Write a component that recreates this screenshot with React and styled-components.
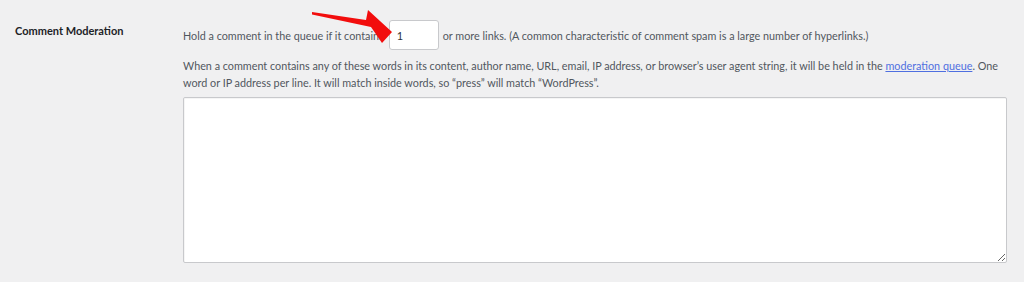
import React from "react";
import styled, { createGlobalStyle } from "styled-components";

const Global = createGlobalStyle`
  html, body { margin: 0; padding: 0; background: #f0f0f1; }
  body { font-family: Lato, "Noto Sans", "Liberation Sans", sans-serif; color: #3c434a; }
`;

const Page = styled.div`
  position: relative;
  width: 1024px;
  height: 282px;
  overflow: hidden;
  padding-left: 15px;
  box-sizing: border-box;
`;

const Row = styled.div`
  display: flex;
  align-items: flex-start;
`;

const Label = styled.div`
  width: 168px;
  flex: none;
  padding-top: 22px;
  font-size: 11px;
  line-height: 17px;
  font-weight: 700;
  color: #1d2327;
`;

const Content = styled.div`
  padding-top: 20px;
  width: 824px;
  font-size: 10.8px;
  line-height: 17px;
  color: #50575e;
`;

const Line = styled.div`
  display: flex;
  align-items: center;
  height: 30px;
  white-space: nowrap;
`;

const NumberBox = styled.div`
  width: 50px;
  height: 30px;
  box-sizing: border-box;
  margin: 0 4px 0 5px;
  background: #fff;
  border: 1px solid #c8c9cc;
  border-radius: 3px;
  padding: 0 7px;
  display: flex;
  align-items: center;
  font-size: 11px;
  color: #2c3338;
`;

const Desc = styled.p`
  margin: 7px 0 0;
  white-space: nowrap;
`;

const Link = styled.a`
  color: #4f6fe0;
  text-decoration: underline;
`;

const TextArea = styled.textarea`
  display: block;
  margin-top: 6px;
  width: 824px;
  height: 166px;
  box-sizing: border-box;
  background: #fff;
  border: 1px solid #c8c9cc;
  border-radius: 2px;
  box-shadow: inset 1px 1px 0 rgba(0,0,0,0.04);
  resize: both;
  outline: none;
  font-family: inherit;
`;

const Arrow = styled.svg`
  position: absolute;
  left: 0;
  top: 0;
  pointer-events: none;
`;

export default function App() {
  return (
    <>
      <Global />
      <Page>
        <Row>
          <Label>Comment Moderation</Label>
          <Content>
            <Line>
              Hold a comment in the queue if it contains
              <NumberBox>1</NumberBox>
              or more links. (A common characteristic of comment spam is a large number of hyperlinks.)
            </Line>
            <Desc>
              When a comment contains any of these words in its content, author name, URL, email, IP address, or browser’s user agent string, it will be held in the <Link href="#">moderation queue</Link>. One
              <br />
              word or IP address per line. It will match inside words, so “press” will match “WordPress”.
            </Desc>
            <TextArea />
          </Content>
        </Row>
        <Arrow width="1024" height="282" viewBox="0 0 1024 282">
          <polygon
            points="312,12 366,20 368,10 392,32 382,43 371,27 312,14.5"
            fill="#f20d0d"
          />
        </Arrow>
      </Page>
    </>
  );
}
